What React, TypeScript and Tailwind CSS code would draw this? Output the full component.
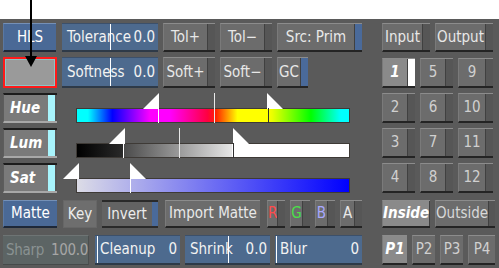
import React from "react";

type BP = { cls: string; children?: React.ReactNode; strip?: string; body?: string; text?: string };

function GBtn({ cls, children, strip = "bg-[#565656]", body = "bg-[#6c6c6c]", text = "text-[#e8e8e8]" }: BP) {
  return (
    <div className={`${cls} h-full flex border-t border-t-[#8c8c8c] border-l border-l-[#7a7a7a] border-b-2 border-b-[#242424] ${body}`}>
      <div className={`flex-1 flex items-center justify-center ${text}`}>{children}</div>
      {strip !== "none" && <div className={`w-[8px] h-full border-l border-l-[#404040] ${strip}`} />}
    </div>
  );
}

function BlueBtn({ cls, children }: { cls: string; children: React.ReactNode }) {
  return (
    <div className={`${cls} h-full flex items-center justify-center bg-[#4a6996] border-t border-t-[#7590b6] border-l border-l-[#5a78a2] border-b-2 border-b-[#1e2838] text-white`}>
      {children}
    </div>
  );
}

function Field({ cls, label, value, line }: { cls: string; label: string; value: string; line: string }) {
  return (
    <div className={`${cls} h-full relative flex items-center justify-between pl-[5px] pr-[3px] bg-[#4d6a8e] border-t border-t-[#3c506a] border-b-2 border-b-[#2e3a48] text-[#f2f2f2]`}>
      <span>{label}</span>
      <span>{value}</span>
      <div className={`absolute top-0 bottom-0 w-px bg-white ${line}`} />
    </div>
  );
}

function Label({ children }: { children: React.ReactNode }) {
  return (
    <div className="w-[54px] h-full flex border-t-2 border-t-[#1c1c1c] border-b-2 border-b-[#a8a8a8] border-l border-l-[#5c5c5c] bg-[#7a7a7a]">
      <div className="flex-1 flex items-center pl-[6px] italic font-bold text-white">{children}</div>
      <div className="w-[7px] bg-[#a8f4fc]" />
      <div className="w-[2px] bg-[#555555]" />
    </div>
  );
}

function TriR({ cls }: { cls: string }) {
  return (
    <svg className={`absolute ${cls}`} width="16" height="16" viewBox="0 0 16 16">
      <polygon points="0,16 16,0 16,16" fill="#ffffff" />
    </svg>
  );
}
function TriL({ cls }: { cls: string }) {
  return (
    <svg className={`absolute ${cls}`} width="16" height="16" viewBox="0 0 16 16">
      <polygon points="0,0 0,16 16,16" fill="#ffffff" />
    </svg>
  );
}

function Slider({ bar, children }: { bar: string; children?: React.ReactNode }) {
  return (
    <div className="relative w-[305px] h-full flex flex-col justify-end">
      <div className={`ml-[19px] w-[274px] h-[15px] border border-[#3e3a36] ${bar}`} />
      {children}
    </div>
  );
}

export default function App() {
  return (
    <div className="w-[499px] h-[268px] relative bg-white overflow-hidden font-['DejaVu_Sans_Condensed','DejaVu_Sans',sans-serif] text-[15px] leading-none">
      <div className="h-[19px] bg-white" />
      <div className="h-[249px] bg-[#5a5a5a] flex pl-[3px] pt-[4px] gap-[20px]">
        {/* left column */}
        <div className="w-[359px] flex flex-col">
          <div className="flex h-[29px]">
            <BlueBtn cls="w-[53px]">HLS</BlueBtn>
            <Field cls="w-[96px] ml-[6px]" label="Tolerance" value="0.0" line="left-[48px]" />
            <GBtn cls="w-[52px] ml-[5px]">Tol+</GBtn>
            <GBtn cls="w-[52px] ml-[5px]">Tol−</GBtn>
            <GBtn cls="w-[85px] ml-[5px]" strip="bg-[#4a6a9a]">Src: Prim</GBtn>
          </div>
          <div className="flex h-[31px] mt-[5px]">
            <div className="w-[54px] h-full border-2 border-[#ff1a1a] bg-[#9a9a9a]">
              <div className="w-full h-full border border-[#8cc4c4]" />
            </div>
            <Field cls="w-[96px] ml-[5px]" label="Softness" value="0.0" line="left-[48px]" />
            <GBtn cls="w-[52px] ml-[5px]">Soft+</GBtn>
            <GBtn cls="w-[52px] ml-[5px]">Soft−</GBtn>
            <GBtn cls="w-[31px] ml-[5px]" strip="bg-[#4a6a9a]">GC</GBtn>
          </div>
          <div className="flex h-[30px] mt-[5px]">
            <Label>Hue</Label>
            <Slider bar="bg-[linear-gradient(to_right,#00ffff_0%,#00ffff_4%,#0000ff_13%,#ff00ff_27%,#ff00ff_34%,#ff0040_48%,#ff2000_51%,#ffff00_59%,#ffff00_70%,#e8ff00_72%,#00ff00_86%,#00ffff_97%)]">
              <TriR cls="left-[86px] top-0" />
              <div className="absolute left-[101px] top-[15px] h-[15px] w-px bg-white" />
              <div className="absolute left-[157px] top-0 h-[30px] w-px bg-[#e8e8e8]" />
              <TriL cls="left-[210px] top-0" />
              <div className="absolute left-[211px] top-[15px] h-[15px] w-px bg-[#303030]" />
            </Slider>
          </div>
          <div className="flex h-[30px] mt-[5px]">
            <Label>Lum</Label>
            <Slider bar="bg-[linear-gradient(to_right,#000000_0%,#2a2a2a_17%,#4a4a4a_17%,#e6e6e6_57%,#ffffff_57%,#ffffff_100%)]">
              <TriR cls="left-[52px] top-0" />
              <div className="absolute left-[66px] top-[15px] h-[15px] w-px bg-white" />
              <div className="absolute left-[122px] top-0 h-[30px] w-px bg-[#e8e8e8]" />
              <TriL cls="left-[176px] top-0" />
              <div className="absolute left-[176px] top-[15px] h-[15px] w-px bg-[#303030]" />
            </Slider>
          </div>
          <div className="flex h-[30px] mt-[5px]">
            <Label>Sat</Label>
            <Slider bar="bg-[linear-gradient(to_right,#dcdce6,#0000ff)]">
              <TriR cls="left-[6px] top-0" />
              <TriL cls="left-[73px] top-0" />
              <div className="absolute left-[73px] top-[15px] h-[15px] w-px bg-white" />
            </Slider>
          </div>
          <div className="flex h-[28px] mt-[7px]">
            <BlueBtn cls="w-[54px]">Matte</BlueBtn>
            <div className="w-[34px] ml-[6px] h-full flex items-center justify-center bg-[#6e6e6e] border border-[#666666] text-[#ececec]">Key</div>
            <div className="w-[56px] ml-[5px] h-full flex border-t-2 border-t-[#2a2a2a] border-b-2 border-b-[#2a2a2a] bg-[#636363]">
              <div className="flex-1 flex items-center justify-center text-[#ececec]">Invert</div>
              <div className="w-[6px] bg-[#4a6a9a]" />
            </div>
            <GBtn cls="w-[95px] ml-[7px]" strip="none">Import Matte</GBtn>
            <GBtn cls="w-[18px] ml-[7px]" strip="bg-[#565656]" text="text-[#ff4a4a]">R</GBtn>
            <GBtn cls="w-[20px] ml-[5px]" text="text-[#4ae04a]">G</GBtn>
            <GBtn cls="w-[20px] ml-[5px]" text="text-[#a8a8ff]">B</GBtn>
            <GBtn cls="w-[22px] ml-[5px]">A</GBtn>
          </div>
          <div className="flex h-[30px] mt-[7px]">
            <div className="w-[86px] h-full flex items-center justify-between pl-[3px] pr-0 tracking-[-0.3px] bg-[#5c6464] border-t border-t-[#6e7474] border-r border-r-[#4a4e4e] border-b border-b-[#464a4a]">
              <span className="text-[#8a9292]">Sharp</span>
              <span className="text-[#a6a6a6]">100.0</span>
            </div>
            <Field cls="w-[85px] ml-[6px]" label="Cleanup" value="0" line="left-[2px]" />
            <Field cls="w-[85px] ml-[5px]" label="Shrink" value="0.0" line="left-[43px]" />
            <Field cls="w-[87px] ml-[5px]" label="Blur" value="0" line="left-[1px]" />
          </div>
        </div>
        {/* right column */}
        <div className="w-[113px] flex flex-col">
          <div className="flex h-[29px]">
            <GBtn cls="w-[48px]">Input</GBtn>
            <GBtn cls="w-[58px] ml-[5px]">Output</GBtn>
          </div>
          <div className="flex h-[30px] mt-[6px]">
            <GBtn cls="w-[33px]" body="bg-[#8a8a8a]" strip="bg-white" text="text-white italic font-bold">1</GBtn>
            <GBtn cls="w-[33px] ml-[5px]" text="text-[#d0d0d0]">5</GBtn>
            <GBtn cls="w-[35px] ml-[5px]" text="text-[#d0d0d0]">9</GBtn>
          </div>
          <div className="flex h-[30px] mt-[5px]">
            <GBtn cls="w-[33px]" text="text-[#d0d0d0]">2</GBtn>
            <GBtn cls="w-[33px] ml-[5px]" text="text-[#d0d0d0]">6</GBtn>
            <GBtn cls="w-[35px] ml-[5px]" text="text-[#d0d0d0]">10</GBtn>
          </div>
          <div className="flex h-[30px] mt-[5px]">
            <GBtn cls="w-[33px]" text="text-[#d0d0d0]">3</GBtn>
            <GBtn cls="w-[33px] ml-[5px]" text="text-[#d0d0d0]">7</GBtn>
            <GBtn cls="w-[35px] ml-[5px]" text="text-[#d0d0d0]">11</GBtn>
          </div>
          <div className="flex h-[30px] mt-[5px]">
            <GBtn cls="w-[33px]" text="text-[#d0d0d0]">4</GBtn>
            <GBtn cls="w-[33px] ml-[5px]" text="text-[#d0d0d0]">8</GBtn>
            <GBtn cls="w-[35px] ml-[5px]" text="text-[#d0d0d0]">12</GBtn>
          </div>
          <div className="flex h-[28px] mt-[7px]">
            <GBtn cls="w-[48px]" body="bg-[#8a8a8a]" strip="bg-white" text="text-white italic font-bold">Inside</GBtn>
            <GBtn cls="w-[60px] ml-[5px]" text="text-[#d8d8d8]">Outside</GBtn>
          </div>
          <div className="flex h-[30px] mt-[7px]">
            <GBtn cls="w-[25px]" body="bg-[#8a8a8a]" strip="none" text="text-white italic font-bold">P1</GBtn>
            <GBtn cls="w-[23px] ml-[5px]" strip="none" text="text-[#d0d0d0]">P2</GBtn>
            <GBtn cls="w-[23px] ml-[5px]" strip="none" text="text-[#d0d0d0]">P3</GBtn>
            <GBtn cls="w-[27px] ml-[5px]" strip="none" text="text-[#d0d0d0]">P4</GBtn>
          </div>
        </div>
      </div>
      {/* pointer arrow */}
      <div className="absolute left-[30px] top-0 w-[2px] h-[58px] bg-black" />
      <svg className="absolute left-[25px] top-[56px]" width="12" height="11" viewBox="0 0 12 11">
        <polygon points="0,0 12,0 6,11" fill="#000000" />
      </svg>
    </div>
  );
}
